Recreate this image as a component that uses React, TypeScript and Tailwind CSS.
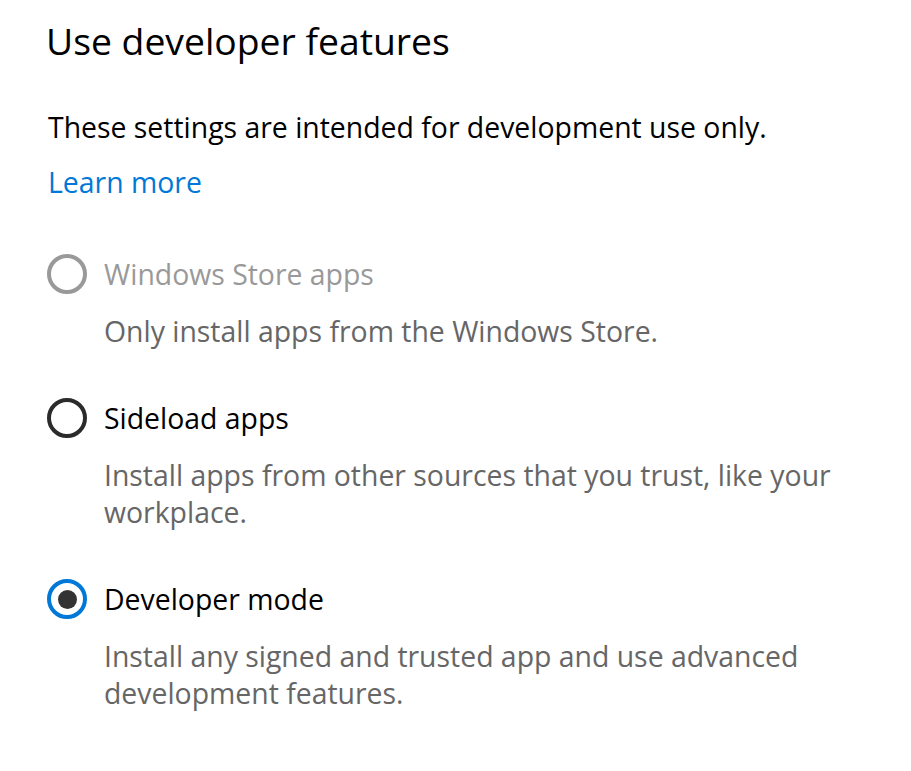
import React from "react";

type Option = {
  label: string;
  desc: string;
  state: "disabled" | "off" | "on";
};

const options: Option[] = [
  { label: "Windows Store apps", desc: "Only install apps from the Windows Store.", state: "disabled" },
  { label: "Sideload apps", desc: "Install apps from other sources that you trust, like your workplace.", state: "off" },
  { label: "Developer mode", desc: "Install any signed and trusted app and use advanced development features.", state: "on" },
];

function Radio({ state }: { state: Option["state"] }) {
  if (state === "on") {
    return (
      <div className="w-[40px] h-[40px] shrink-0 rounded-full border-[4px] border-[#0078d7] flex items-center justify-center">
        <div className="w-[19px] h-[19px] rounded-full bg-[#333333]" />
      </div>
    );
  }
  return (
    <div
      className={
        state === "disabled"
          ? "w-[40px] h-[40px] shrink-0 rounded-full border-[4px] border-[#999999]"
          : "w-[40px] h-[40px] shrink-0 rounded-full border-[4px] border-[#2b2b2b]"
      }
    />
  );
}

export default function App() {
  return (
    <div className="min-h-[771px] bg-white pl-[46px] pt-[15px] font-['Open_Sans',sans-serif]">
      <h1 className="text-[37.3px] leading-[52px] text-black">Use developer features</h1>
      <p className="mt-[42px] pl-[2px] text-[28.4px] leading-[37px] text-black">
        These settings are intended for development use only.
      </p>
      <a className="block mt-[18px] pl-[2px] text-[28.4px] leading-[37px] text-[#0078d7]">Learn more</a>

      <div className="mt-[53px] pl-[1px] flex flex-col gap-[48px]">
        {options.map((o) => (
          <div key={o.label}>
            <div className="flex items-center gap-[17px]">
              <Radio state={o.state} />
              <span
                className={
                  o.state === "disabled"
                    ? "text-[28.4px] leading-[37px] text-[#999999]"
                    : "text-[28.4px] leading-[37px] text-black"
                }
              >
                {o.label}
              </span>
            </div>
            <p className="mt-[19px] ml-[57px] w-[750px] text-[28.4px] leading-[37px] text-[#666666]">{o.desc}</p>
          </div>
        ))}
      </div>
    </div>
  );
}
